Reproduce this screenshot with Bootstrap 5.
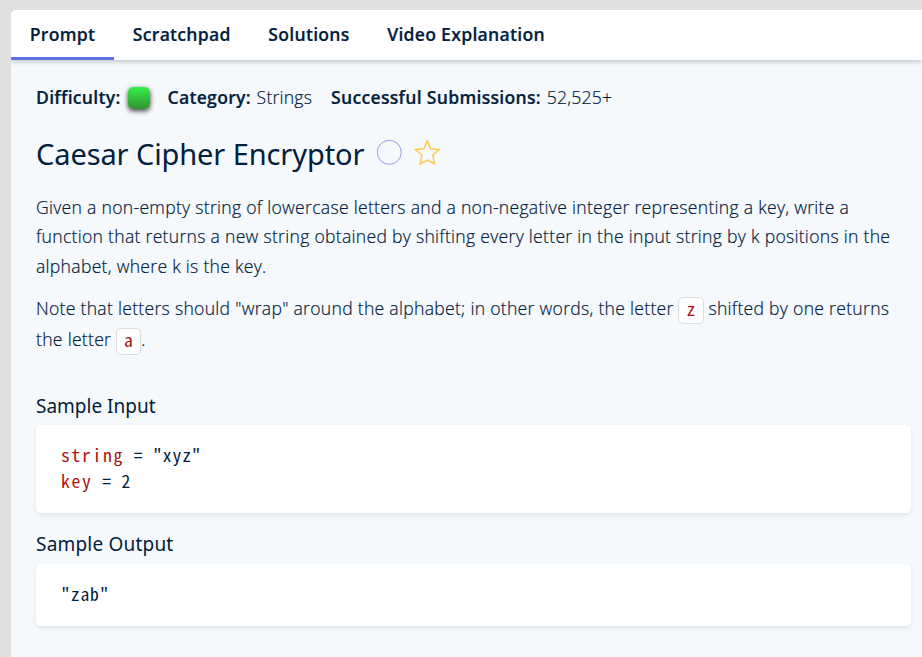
<!DOCTYPE html>
<html lang="en">
<head>
<meta charset="utf-8">
<meta name="viewport" content="width=device-width, initial-scale=1">
<title>Caesar Cipher Encryptor</title>
<link href="https://cdn.jsdelivr.net/npm/bootstrap@5.3.0/dist/css/bootstrap.min.css" rel="stylesheet">
<style>
body{background:#e0e0e0;color:#02203c;font-family:"Open Sans",sans-serif;font-size:17.6px;overflow:hidden}
.panel{margin:10px 0 0 11px;height:647px;background:#f5f9fc;border-top-left-radius:5px;overflow:hidden}
.tabs{height:50px;background:#fff;box-shadow:0 2px 5px rgba(0,0,0,.2);flex-wrap:nowrap}
.tabs .nav-link{height:50px;padding:0 18.75px;line-height:49px;color:#02203c;font-weight:600;letter-spacing:.28px;-webkit-text-stroke:.2px #02203c;white-space:nowrap;border-bottom:3px solid transparent}
.tabs .nav-link.active{border-bottom-color:#626ee3}
.content{padding:22px 11px 0 25px}
.stats{height:30px;line-height:30px;font-weight:300;letter-spacing:.2px;-webkit-text-stroke:.2px #02203c;white-space:nowrap}
.stats b{font-weight:600;letter-spacing:.28px}
.stats .val{margin-left:1px}
.category{margin-right:19px}
.level{width:22px;height:22px;border-radius:5px;background:linear-gradient(#37f04a,#329232);box-shadow:0 2px 5px rgba(0,0,0,.75);margin:1px 18px 0 7px}
.title-row{margin-top:22px}
.title{font-family:"Noto Sans",sans-serif;font-size:29px;line-height:40px;font-weight:400;letter-spacing:-.1px;white-space:nowrap}
.title-icons{margin:0 0 4px 11px}
.copy{font-weight:300;line-height:29.5px;letter-spacing:.28px;-webkit-text-stroke:.2px #02203c;margin-top:18.6px;white-space:nowrap}
.copy p{margin-bottom:12.4px}
.copy code{font-family:"Noto Sans Mono CJK SC","Liberation Mono",monospace;font-size:17.6px;line-height:18px;color:#a11;background:#fff;border:1px solid #ddd;border-radius:5px;display:inline-block;padding:2px 7px 5px;font-weight:400;vertical-align:-1px;-webkit-text-stroke:0}
.copy .wrapped{line-height:30.5px}
.label-head{font-family:"Noto Sans",sans-serif;font-size:19px;line-height:26px;font-weight:400;margin:38px 0 6px}
.label-head.second{margin:18px 0 7px;letter-spacing:.2px}
.sample{background:#fff;border-radius:5px;box-shadow:0 2px 5px rgba(0,0,0,.09);padding:17px 25px 19px;font-family:"Noto Sans Mono CJK SC","Liberation Mono",monospace;font-size:17.6px;letter-spacing:.9px;line-height:26px;color:#02203c}
.sample .var{color:#a11;letter-spacing:1.7px}
</style>
<script src="https://cdn.jsdelivr.net/npm/bootstrap@5.3.0/dist/js/bootstrap.bundle.min.js"></script>
</head>
<body>
<main class="panel">
  <nav class="nav tabs">
    <a class="nav-link active" href="#">Prompt</a>
    <a class="nav-link" href="#">Scratchpad</a>
    <a class="nav-link" href="#">Solutions</a>
    <a class="nav-link" href="#">Video Explanation</a>
  </nav>
  <div class="content">
    <div class="stats d-flex align-items-center">
      <b>Difficulty:</b><span class="level"></span>
      <span class="category"><b>Category:</b> <span class="val">Strings</span></span>
      <span><b>Successful Submissions:</b> <span class="val">52,525+</span></span>
    </div>
    <div class="title-row d-flex align-items-center">
      <h1 class="title mb-0">Caesar Cipher Encryptor</h1>
      <svg class="title-icons" width="66" height="28" viewBox="0 0 66 28" fill="none"><circle cx="14.3" cy="14.3" r="12" stroke="#969de6"/><path d="M52.3 2.8l3.4 7.9 8.4.8-6.3 5.8 1.6 8.5-7.1-3.7-7.1 3.7 1.6-8.5-6.3-5.8 8.4-.8z" stroke="#ffc850" stroke-width="1.5"/></svg>
    </div>
    <div class="copy">
      <p>Given a non-empty string of lowercase letters and a non-negative integer representing a key, write a<br>function that returns a new string obtained by shifting every letter in the input string by k positions in the<br>alphabet, where k is the key.</p>
      <p class="wrapped mb-0">Note that letters should "wrap" around the alphabet; in other words, the letter <code>z</code> shifted by one returns<br>the letter <code>a</code>.</p>
    </div>
    <h2 class="label-head">Sample Input</h2>
    <div class="sample"><div><span class="var">string</span> = "xyz"</div><div><span class="var">key</span> = 2</div></div>
    <h2 class="label-head second">Sample Output</h2>
    <div class="sample">"zab"</div>
  </div>
</main>
</body>
</html>
